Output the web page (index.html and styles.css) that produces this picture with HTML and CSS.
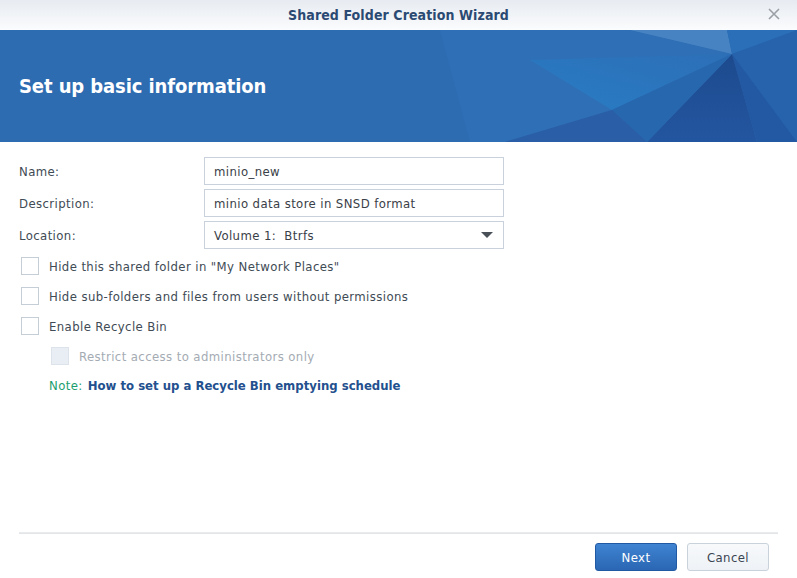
FILE: index.html
```html
<!DOCTYPE html>
<html>
<head>
<meta charset="utf-8">
<link rel="stylesheet" href="styles.css">
</head>
<body>
<div class="window">
  <div class="titlebar">
    <span class="title">Shared Folder Creation Wizard</span>
    <svg class="close" width="12" height="12" viewBox="0 0 12 12"><path d="M1 1 L11 11 M11 1 L1 11" stroke="#9aa0a6" stroke-width="1.6" fill="none"/></svg>
  </div>
  <div class="banner">
    <svg class="banner-art" width="797" height="112" viewBox="0 0 797 112">
      <defs>
        <linearGradient id="bright" x1="0" y1="1" x2="1" y2="0">
          <stop offset="0" stop-color="#2387cf"/>
          <stop offset="1" stop-color="#2a6fb8"/>
        </linearGradient>
        <linearGradient id="dark" x1="0" y1="0" x2="0" y2="1">
          <stop offset="0" stop-color="#1d4a8e"/>
          <stop offset="1" stop-color="#2356a0"/>
        </linearGradient>
      </defs>
      <polygon points="440,0 630,0 732,24 612,80 505,112 470,112" fill="#3072b9" opacity="0.5"/>
      <polygon points="530,30 732,24 612,80" fill="url(#bright)" opacity="0.55"/>
      <polygon points="630,0 727,0 732,24" fill="#4a86c3" opacity="0.9"/>
      <polygon points="727,0 797,0 732,24" fill="#2a6fb8"/>
      <polygon points="732,24 797,0 797,112" fill="#2663ac"/>
      <polygon points="732,24 797,112 757,112" fill="#2259a2"/>
      <polygon points="732,24 757,112 647,112" fill="url(#dark)"/>
      <polygon points="612,80 732,24 647,112" fill="#2767ae"/>
      <polygon points="505,112 612,80 647,112" fill="#2a5ea6"/>
    </svg>
    <h1 class="heading">Set up basic information</h1>
  </div>
  <div class="content">
    <div class="form">
      <label class="label">Name:</label>
      <div class="field">minio_new</div>
      <label class="label">Description:</label>
      <div class="field">minio data store in SNSD format</div>
      <label class="label">Location:</label>
      <div class="field select"><span>Volume 1:&nbsp; Btrfs</span><span class="caret"></span></div>
    </div>
    <div class="checks">
      <div class="check"><span class="box"></span><span>Hide this shared folder in "My Network Places"</span></div>
      <div class="check"><span class="box"></span><span>Hide sub-folders and files from users without permissions</span></div>
      <div class="check"><span class="box"></span><span>Enable Recycle Bin</span></div>
      <div class="check sub disabled"><span class="box"></span><span>Restrict access to administrators only</span></div>
      <div class="note"><span class="note-label">Note:</span> <a class="note-link">How to set up a Recycle Bin emptying schedule</a></div>
    </div>
  </div>
  <div class="footer">
    <div class="divider"></div>
    <div class="buttons">
      <button class="btn primary">Next</button>
      <button class="btn">Cancel</button>
    </div>
  </div>
</div>
</body>
</html>
```

FILE: styles.css
```css
html, body {
  margin: 0;
  padding: 0;
  background: #ffffff;
}
.window {
  width: 797px;
  height: 578px;
  display: flex;
  flex-direction: column;
  font-family: "DejaVu Sans Condensed", "DejaVu Sans", sans-serif;
  font-size: 13px;
  letter-spacing: 0.4px;
  color: #414b55;
}
.titlebar {
  height: 30px;
  flex: none;
  position: relative;
  display: flex;
  align-items: center;
  justify-content: center;
  background: linear-gradient(#e7ebf1, #fbfcfd);
}
.title {
  font-family: "DejaVu Sans Condensed", sans-serif;
  font-weight: bold;
  font-size: 14px;
  letter-spacing: 0.1px;
  color: #2b4a73;
}
.close {
  position: absolute;
  right: 17px;
  top: 8px;
}
.banner {
  height: 112px;
  flex: none;
  position: relative;
  background: #2e6cb2;
  display: flex;
  align-items: center;
  overflow: hidden;
}
.banner-art {
  position: absolute;
  left: 0;
  top: 0;
}
.heading {
  position: relative;
  margin: 0 0 0 19px;
  font-family: "DejaVu Sans Condensed", sans-serif;
  font-weight: bold;
  font-size: 20px;
  letter-spacing: -0.1px;
  color: #ffffff;
}
.content {
  flex: 1;
  padding: 15px 19px 0 19px;
}
.form {
  display: grid;
  grid-template-columns: 185px 300px;
  grid-auto-rows: 28px;
  row-gap: 4px;
  align-items: center;
}
.label {
  color: #414b55;
}
.field {
  height: 28px;
  box-sizing: border-box;
  border: 1px solid #c9d2dc;
  padding: 0 9px;
  display: flex;
  align-items: center;
  color: #3a4048;
  background: #fff;
}
.select {
  justify-content: space-between;
}
.caret {
  width: 0;
  height: 0;
  border-left: 6px solid transparent;
  border-right: 6px solid transparent;
  border-top: 6px solid #4a5058;
  margin-right: 1px;
}
.checks {
  margin-top: 8px;
  display: flex;
  flex-direction: column;
  gap: 12px;
}
.check {
  height: 18px;
  display: flex;
  align-items: center;
  gap: 10px;
  padding-left: 2px;
  color: #414b55;
}
.box {
  width: 18px;
  height: 18px;
  box-sizing: border-box;
  border: 1px solid #c5cdd6;
  background: #fff;
  flex: none;
}
.sub {
  padding-left: 32px;
}
.disabled {
  color: #a4abb3;
}
.disabled .box {
  background: #e9eef4;
  border-color: #dde3ea;
}
.note {
  height: 18px;
  line-height: 18px;
  padding-left: 30px;
  word-spacing: 1px;
}
.note-label {
  color: #1b9e6e;
}
.note-link {
  color: #23508e;
  font-weight: bold;
  letter-spacing: 0;
  word-spacing: 0;
}
.footer {
  flex: none;
  padding: 0 19px 7px 19px;
}
.divider {
  height: 2px;
  background: linear-gradient(#eceef0, #e0e3e6);
}
.buttons {
  margin-top: 9px;
  display: flex;
  justify-content: flex-end;
  gap: 10px;
  padding-right: 9px;
}
.btn {
  width: 82px;
  height: 28px;
  box-sizing: border-box;
  border: 1px solid #c9d1da;
  border-radius: 3px;
  background: linear-gradient(#f7f9fb, #eef2f6);
  font-family: "DejaVu Sans Condensed", "DejaVu Sans", sans-serif;
  font-size: 13px;
  letter-spacing: 0.4px;
  color: #3a4552;
  padding: 0;
}
.primary {
  border-color: #2159a3;
  background: linear-gradient(#3f84d2, #2a66b3);
  color: #ffffff;
}
```
